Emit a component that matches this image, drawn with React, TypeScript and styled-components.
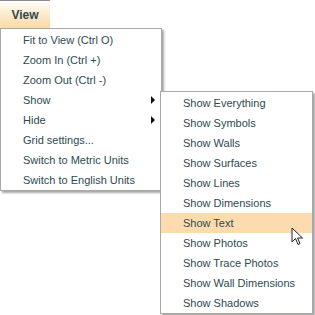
import styled, { createGlobalStyle } from "styled-components";

const GlobalStyle = createGlobalStyle`
  html, body {
    margin: 0;
    padding: 0;
    background: #fff;
  }
  body {
    font-family: "Liberation Sans", Arial, sans-serif;
  }
`;

const Page = styled.div`
  width: 315px;
  height: 315px;
  overflow: hidden;
  background: #fff;
  display: flex;
  flex-direction: column;
  align-items: flex-start;
`;

const MenuBar = styled.div`
  display: flex;
  height: 28px;
`;

const Tab = styled.div`
  width: 50px;
  box-sizing: border-box;
  border-top: 1px solid #8a8a8a;
  background: linear-gradient(to bottom, #ffffff 0%, #fdeccf 45%, #fbd9a6 100%);
  display: flex;
  align-items: center;
  justify-content: center;
  font-size: 12px;
  font-weight: bold;
  color: #2c4953;
  padding-top: 1px;
`;

const Menu = styled.div<{ $width: number }>`
  width: ${(p) => p.$width}px;
  box-sizing: border-box;
  background: #fff;
  border: 1px solid #a9a9a4;
  padding: 1px 0 0;
  box-shadow: 2px 2px 2px rgba(0, 0, 0, 0.35);
  display: flex;
  flex-direction: column;
`;

// submenu flies out to the right of its parent item
const SubMenu = styled(Menu)`
  position: absolute;
  top: 1px;
  left: 159px;
  z-index: 2;
`;

const Item = styled.div<{ $active?: boolean }>`
  position: relative;
  height: 20px;
  display: flex;
  align-items: center;
  padding-left: 22px;
  font-size: 11px;
  color: #2d4a52;
  background: ${(p) => (p.$active ? "#fcdcaf" : "transparent")};
  white-space: nowrap;
`;

const Arrow = styled.span`
  position: absolute;
  right: 6px;
  top: 6px;
  width: 0;
  height: 0;
  border-top: 4px solid transparent;
  border-bottom: 4px solid transparent;
  border-left: 4px solid #111;
`;

const Cursor = styled.svg`
  position: absolute;
  left: 130px;
  top: 14px;
`;

const showItems = [
  "Show Everything",
  "Show Symbols",
  "Show Walls",
  "Show Surfaces",
  "Show Lines",
  "Show Dimensions",
  "Show Text",
  "Show Photos",
  "Show Trace Photos",
  "Show Wall Dimensions",
  "Show Shadows",
];

function ShowSubMenu() {
  return (
    <SubMenu $width={153}>
      {showItems.map((label) => (
        <Item key={label} $active={label === "Show Text"}>
          {label}
          {label === "Show Text" && (
            <Cursor width="13" height="19" viewBox="0 0 13 19">
              <path
                d="M1 1 L1 15 L4.5 11.5 L7 17.5 L9 16.6 L6.6 11 L11.5 11 Z"
                fill="#fff"
                stroke="#222"
                strokeWidth="1"
                strokeLinejoin="round"
              />
            </Cursor>
          )}
        </Item>
      ))}
    </SubMenu>
  );
}

const mainItems = [
  { label: "Fit to View (Ctrl O)" },
  { label: "Zoom In (Ctrl +)" },
  { label: "Zoom Out (Ctrl -)" },
  { label: "Show", sub: true, open: true },
  { label: "Hide", sub: true },
  { label: "Grid settings..." },
  { label: "Switch to Metric Units" },
  { label: "Switch to English Units" },
];

export default function App() {
  return (
    <Page>
      <GlobalStyle />
      <MenuBar>
        <Tab>View</Tab>
      </MenuBar>

      <Menu $width={162}>
        {mainItems.map((it) => (
          <Item key={it.label}>
            {it.label}
            {it.sub && <Arrow />}
            {it.open && <ShowSubMenu />}
          </Item>
        ))}
      </Menu>
    </Page>
  );
}
